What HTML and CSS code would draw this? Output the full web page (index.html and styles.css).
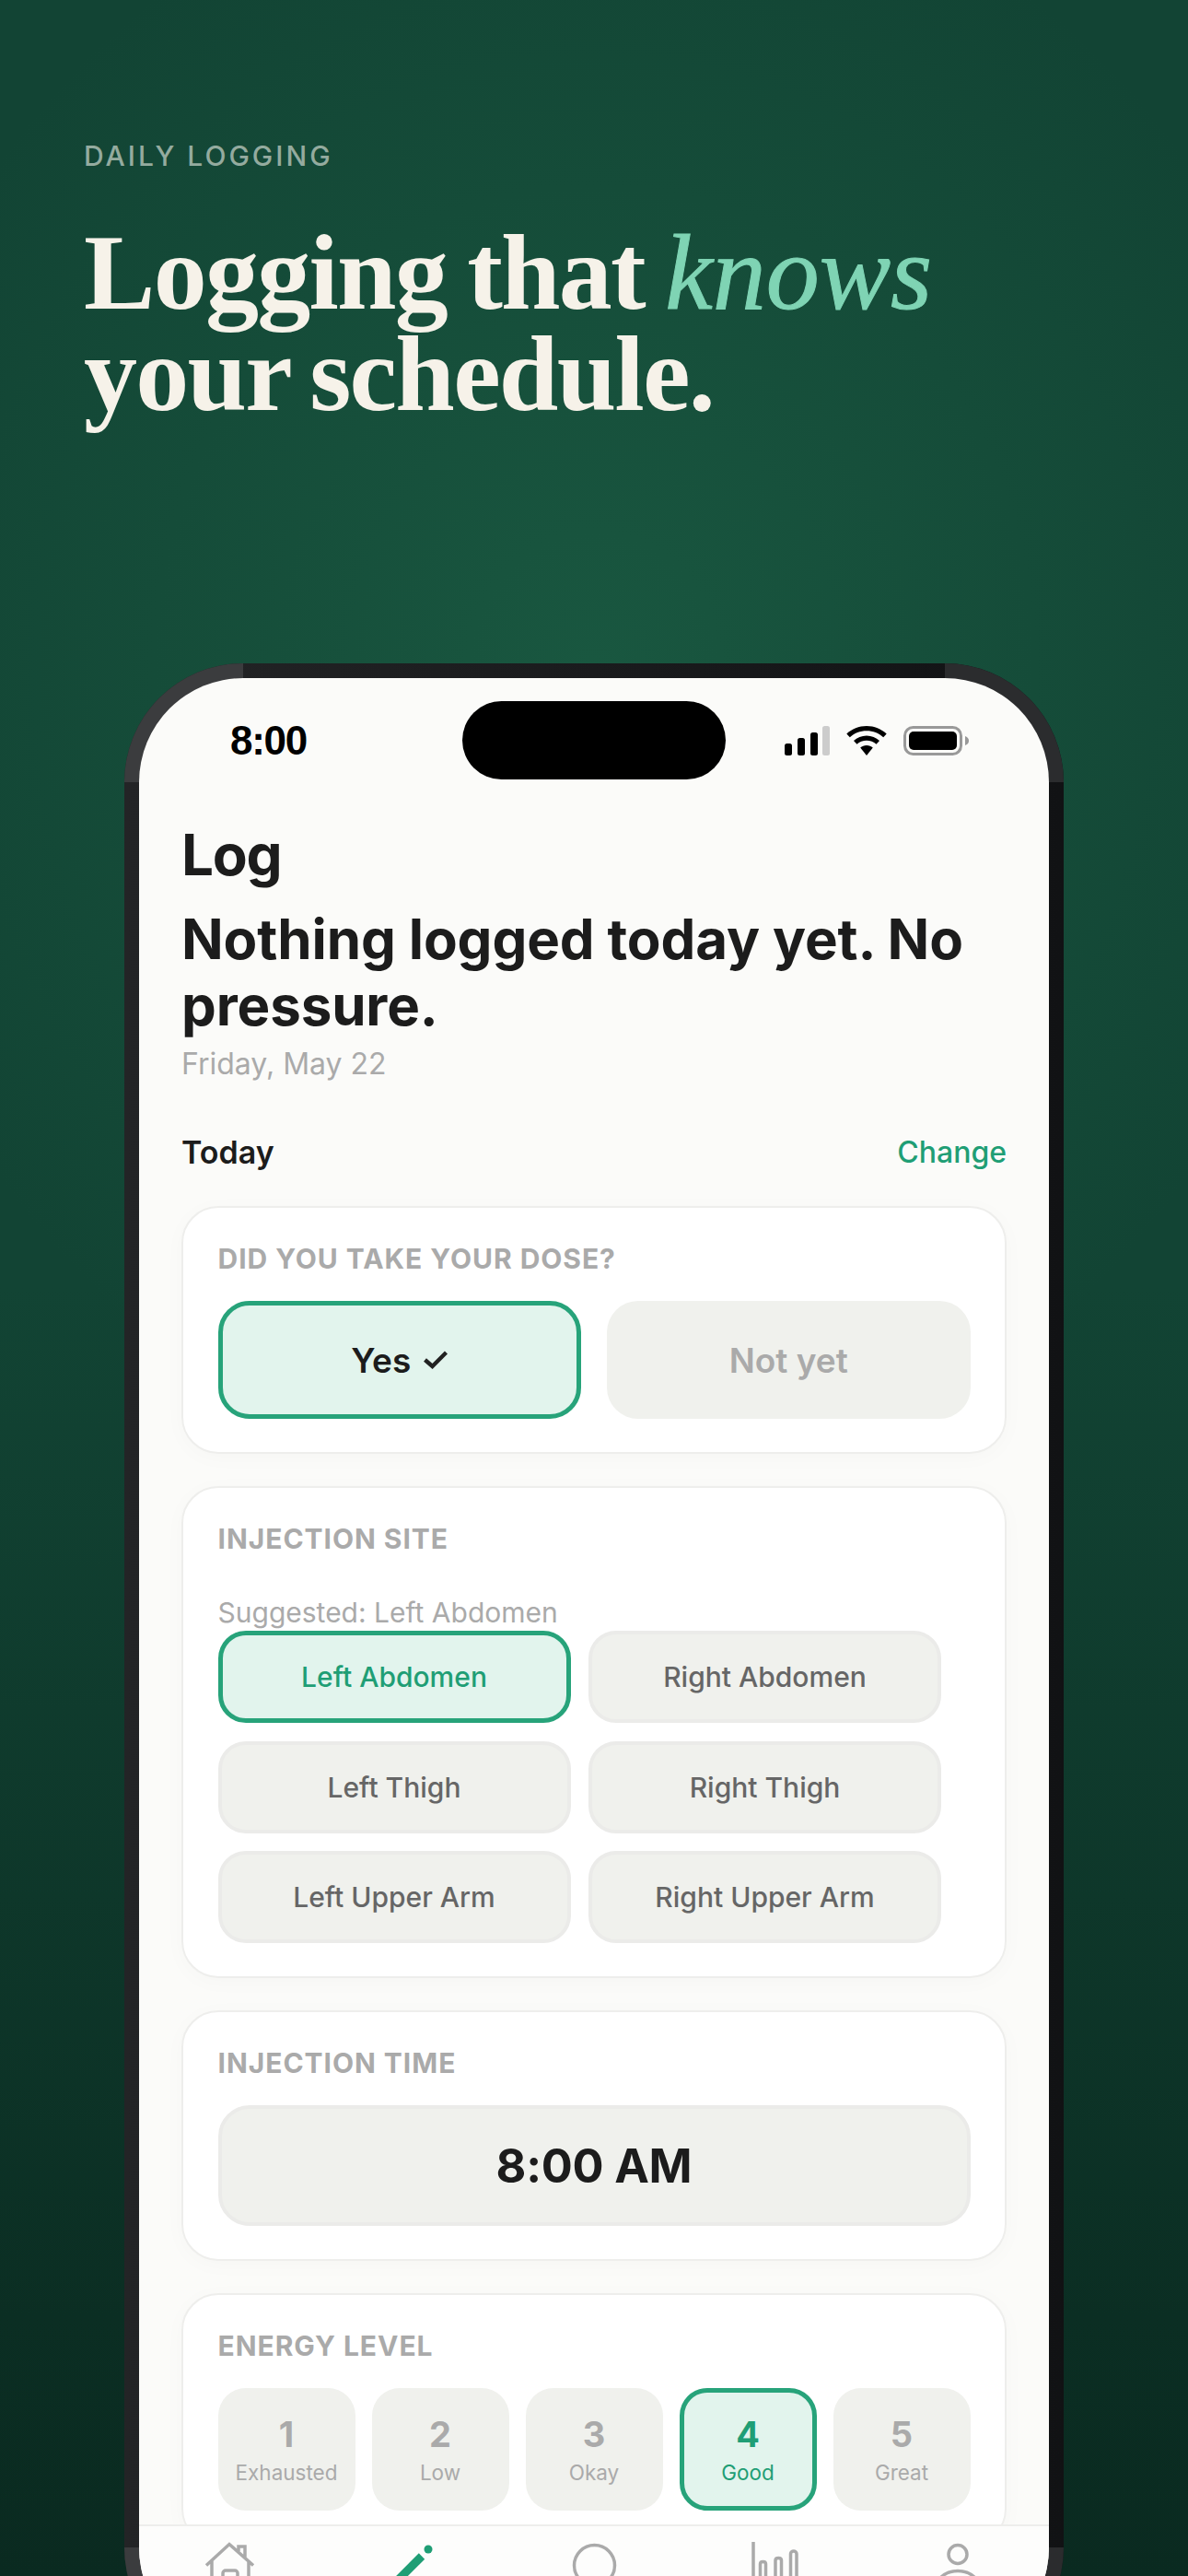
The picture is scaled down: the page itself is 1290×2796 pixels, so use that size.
FILE: index.html
```html
<!DOCTYPE html>
<html>

<head>
    <meta charset="UTF-8">
    <title>Daily Logging</title>
    <link rel="stylesheet" href="styles.css">
</head>

<body>
    <header class="hero">
        <div class="eyebrow">DAILY LOGGING</div>
        <h1 class="headline">Logging that <em>knows</em><br>your schedule.</h1>
    </header>

    <div class="phone">
        <span class="corner corner-tl"></span>
        <span class="corner corner-tr"></span>
        <span class="corner corner-bl"></span>
        <span class="corner corner-br"></span>

        <div class="screen">
            <div class="island"></div>

            <div class="status-bar">
                <span class="status-time">8:00</span>
                <div class="status-icons">
                    <svg width="49" height="32" viewBox="0 0 49 32">
                        <rect x="0" y="19" width="8" height="13" rx="2.5" fill="#000" />
                        <rect x="14" y="13" width="8" height="19" rx="2.5" fill="#000" />
                        <rect x="28" y="7" width="8" height="25" rx="2.5" fill="#000" />
                        <rect x="41" y="0" width="8" height="32" rx="2.5" fill="#ccc" />
                    </svg>
                    <svg width="44" height="32" viewBox="0 0 44 32">
                        <path d="M22 0C13.600 0 6.100 3.200 0.300 8.500L3.800 12.200C8.600 7.800 15 5.200 22 5.200S35.400 7.800 40.200 12.200L43.700 8.500C37.900 3.200 30.400 0 22 0Z" fill="#000" />
                        <path d="M22 10.500C16.600 10.500 11.700 12.600 8 16L11.500 19.700C14.300 17.200 18 15.700 22 15.700S29.700 17.200 32.500 19.700L36 16C32.300 12.600 27.400 10.500 22 10.500Z" fill="#000" />
                        <path d="M22 21C19.300 21 17 22 15.200 23.600L22 32L28.800 23.600C27 22 24.700 21 22 21Z" fill="#000" />
                    </svg>
                    <svg width="72" height="32" viewBox="0 0 72 32">
                        <rect x="1.500" y="1.500" width="61" height="29" rx="9" fill="none" stroke="#999" stroke-width="3" />
                        <rect x="6" y="6" width="52" height="20" rx="5" fill="#000" />
                        <path d="M67 11C70 12 71 14 71 16S70 20 67 21Z" fill="#999" />
                    </svg>
                </div>
            </div>

            <div class="content">
                <h2 class="page-title">Log</h2>
                <p class="greeting">Nothing logged today yet. No pressure.</p>
                <p class="date">Friday, May 22</p>

                <div class="day-row">
                    <span class="day-label">Today</span>
                    <span class="day-change">Change</span>
                </div>

                <section class="card">
                    <div class="card-label">DID YOU TAKE YOUR DOSE?</div>
                    <div class="dose-row">
                        <div class="dose-btn dose-btn-on">Yes
                            <svg width="26" height="20" viewBox="0 0 26 20">
                                <path d="M1.500 10L9.500 17L24.500 2" fill="none" stroke="#222" stroke-width="4.400" />
                            </svg>
                        </div>
                        <div class="dose-btn">Not yet</div>
                    </div>
                </section>

                <section class="card">
                    <div class="card-label">INJECTION SITE</div>
                    <div class="suggested">Suggested: Left Abdomen</div>
                    <div class="site-grid">
                        <div class="site-btn site-btn-on">Left Abdomen</div>
                        <div class="site-btn">Right Abdomen</div>
                        <div class="site-btn">Left Thigh</div>
                        <div class="site-btn">Right Thigh</div>
                        <div class="site-btn">Left Upper Arm</div>
                        <div class="site-btn">Right Upper Arm</div>
                    </div>
                </section>

                <section class="card">
                    <div class="card-label">INJECTION TIME</div>
                    <div class="time-field">8:00 AM</div>
                </section>

                <section class="card">
                    <div class="card-label">ENERGY LEVEL</div>
                    <div class="energy-row">
                        <div class="energy-btn"><b>1</b><span>Exhausted</span></div>
                        <div class="energy-btn"><b>2</b><span>Low</span></div>
                        <div class="energy-btn"><b>3</b><span>Okay</span></div>
                        <div class="energy-btn energy-btn-on"><b>4</b><span>Good</span></div>
                        <div class="energy-btn"><b>5</b><span>Great</span></div>
                    </div>
                </section>
            </div>

            <nav class="tab-bar">
                <svg width="60" height="60" viewBox="0 0 60 60" fill="none" stroke="#aaa" stroke-width="3.500">
                    <path d="M4 25.500L29 2.500L55 25.500M10 20V58H50V20M39 10V5H46V18" />
                    <rect x="22" y="31" width="16" height="27" rx="3" />
                </svg>
                <svg width="60" height="60" viewBox="0 0 60 60">
                    <path d="M41 15.500L6 50.500" fill="none" stroke="#1f9e75" stroke-width="9" />
                    <circle cx="48" cy="8" r="4.500" fill="#1f9e75" />
                </svg>
                <svg width="60" height="60" viewBox="0 0 60 60" fill="none" stroke="#aaa" stroke-width="3.500">
                    <circle cx="30.500" cy="25.500" r="22" />
                </svg>
                <svg width="60" height="60" viewBox="0 0 60 60" fill="none" stroke="#aaa" stroke-width="3.500">
                    <path d="M5 0V58" />
                    <path d="M12.500 58V24C12.500 20.500 18.500 20.500 18.500 24V58" />
                    <path d="M29 58V20C29 16.500 35.500 16.500 35.500 20V58" />
                    <path d="M45.500 58V13C45.500 9 52 9 52 13V58" />
                </svg>
                <svg width="60" height="60" viewBox="0 0 60 60" fill="none" stroke="#aaa" stroke-width="3.500">
                    <circle cx="30" cy="13.500" r="10" />
                    <path d="M4 58C4 41 16 31.500 30 31.500S56 41 56 58" />
                </svg>
            </nav>
        </div>
    </div>
</body>

</html>
```
FILE: styles.css
```css
* {
    box-sizing: border-box;
}

html,
body {
    margin: 0;
    padding: 0;
    height: 2796px;
    overflow: hidden;
}

body {
    font-family: "Inter", sans-serif;
    color: #1c1c1c;
    background:
        radial-gradient(ellipse 820px 900px at 50% 26%, rgba(30, 100, 72, 0.6), rgba(30, 100, 72, 0) 100%),
        linear-gradient(180deg, #124434 0%, #124434 50%, #0b2e23 90%, #0a2a20 100%);
}

.hero {
    padding: 150px 0 0 91px;
    height: 720px;
}

.eyebrow {
    font-size: 30px;
    line-height: 38px;
    font-weight: 500;
    letter-spacing: 0.1em;
    color: #94ab9f;
}

.headline {
    margin: 53px 0 0;
    font-family: "Liberation Serif", serif;
    font-size: 116px;
    line-height: 110px;
    font-weight: 700;
    letter-spacing: -0.015em;
    word-spacing: -5px;
    color: #f6f2e9;
}

.headline em {
    font-weight: 400;
    letter-spacing: 0;
    color: #7fd4b4;
    -webkit-text-stroke: 1px #7fd4b4;
}

.phone {
    position: relative;
    width: 1020px;
    height: 2174px;
    margin-left: 135px;
    padding: 16px;
    border-radius: 129px;
    background: linear-gradient(90deg, #232426, #111214);
    overflow: hidden;
}

.corner {
    position: absolute;
    width: 129px;
    height: 129px;
}

.corner-tl {
    top: 0;
    left: 0;
    background: #3b3c3e;
}

.corner-tr {
    top: 0;
    right: 0;
    background: #2b2c2e;
}

.corner-bl {
    bottom: 0;
    left: 0;
    background: #3b3c3e;
}

.corner-br {
    bottom: 0;
    right: 0;
    background: #2b2c2e;
}

.screen {
    position: relative;
    height: 100%;
    border-radius: 113px;
    background: #fbfbf9;
    overflow: hidden;
}

.island {
    position: absolute;
    top: 25px;
    left: 351px;
    width: 286px;
    height: 85px;
    border-radius: 43px;
    background: #000;
}

.status-bar {
    display: flex;
    justify-content: space-between;
    align-items: center;
    height: 85px;
    margin-top: 25px;
    padding: 0 86px 0 99px;
}

.status-time {
    font-family: "Liberation Sans", sans-serif;
    font-size: 44px;
    font-weight: 700;
    letter-spacing: -0.03em;
    color: #000;
}

.status-icons {
    display: flex;
    align-items: center;
    gap: 18px;
}

.content {
    padding: 0 46px;
}

.page-title {
    margin: 46px 0 0;
    font-size: 62px;
    line-height: 72px;
    font-weight: 700;
    letter-spacing: -0.02em;
}

.greeting {
    margin: 19px 0 0;
    font-size: 60px;
    line-height: 72px;
    font-weight: 700;
    letter-spacing: -0.002em;
}

.date {
    margin: 8px 0 0;
    font-size: 32px;
    line-height: 40px;
    color: #aaa;
}

.day-row {
    display: flex;
    justify-content: space-between;
    align-items: center;
    margin-top: 54px;
    margin-bottom: 36px;
    line-height: 44px;
}

.day-label {
    font-size: 34px;
    font-weight: 600;
}

.day-change {
    font-size: 32px;
    font-weight: 500;
    color: #1f9e75;
}

.card {
    margin-bottom: 35px;
    padding: 36px 37.5px 36px;
    border: 2px solid #eeeeec;
    border-radius: 40px;
    background: #fff;
    box-shadow: 0 4px 24px rgba(0, 0, 0, 0.025);
}

.card-label {
    font-size: 30px;
    line-height: 38px;
    font-weight: 700;
    letter-spacing: 0.032em;
    color: #aaa;
}

.dose-row {
    display: grid;
    grid-template-columns: 1fr 1fr;
    gap: 28px;
    margin-top: 27px;
}

.dose-btn {
    display: flex;
    justify-content: center;
    align-items: center;
    gap: 14px;
    height: 128px;
    border-radius: 34px;
    background: #f0f1ed;
    font-size: 37px;
    font-weight: 600;
    color: #aaa;
}

.dose-btn-on {
    border: 5px solid #27a37a;
    background: #e2f4ed;
    color: #1c1c1c;
}

.suggested {
    margin-top: 41px;
    font-size: 30px;
    line-height: 40px;
    color: #aaa;
}

.site-grid {
    display: grid;
    grid-template-columns: 383px 383px;
    grid-auto-rows: 100px;
    gap: 19.5px;
}

.site-btn {
    display: flex;
    justify-content: center;
    align-items: center;
    border: 4px solid #ebebe9;
    border-radius: 30px;
    background: #f0f1ed;
    font-size: 30px;
    font-weight: 500;
    color: #666;
}

.site-btn-on {
    border: 5px solid #27a37a;
    background: #e2f4ed;
    color: #1f9e75;
}

.time-field {
    display: flex;
    justify-content: center;
    align-items: center;
    height: 131px;
    margin-top: 27px;
    border: 4px solid #ebebe9;
    border-radius: 34px;
    background: #f0f1ed;
    font-size: 50.5px;
    font-weight: 700;
    letter-spacing: -0.005em;
}

.energy-row {
    display: grid;
    grid-template-columns: repeat(5, 1fr);
    gap: 18px;
    margin-top: 27px;
}

.energy-btn {
    display: flex;
    flex-direction: column;
    justify-content: center;
    align-items: center;
    height: 133px;
    border-radius: 30px;
    background: #f0f1ed;
    color: #aaa;
}

.energy-btn b {
    font-size: 38px;
    line-height: 46px;
    font-weight: 700;
}

.energy-btn span {
    margin-top: 4px;
    font-size: 22.5px;
    line-height: 30px;
}

.energy-btn-on {
    border: 5px solid #27a37a;
    background: #e2f4ed;
    color: #1f9e75;
}

.tab-bar {
    position: absolute;
    top: 2004px;
    left: 0;
    right: 0;
    bottom: 0;
    display: grid;
    grid-template-columns: repeat(5, 1fr);
    justify-items: center;
    align-items: start;
    padding-top: 17px;
    border-top: 2px solid #eeeeec;
    background: #fdfdfc;
}
```
